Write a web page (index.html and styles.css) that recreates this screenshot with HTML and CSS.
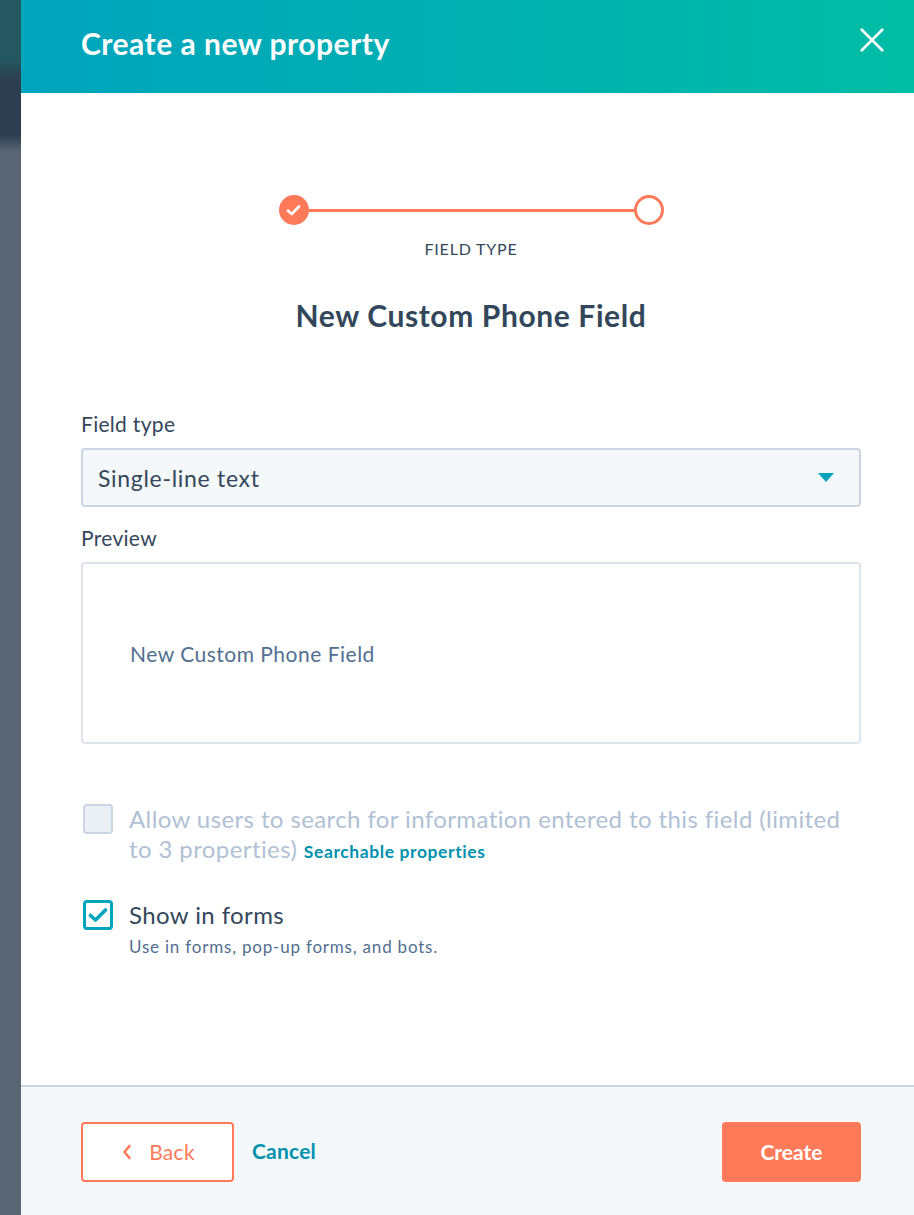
FILE: index.html
```html
<!DOCTYPE html>
<html>
<head>
<meta charset="utf-8">
<link rel="stylesheet" href="styles.css">
</head>
<body>
<div class="page">
  <div class="backdrop"></div>
  <div class="panel">
    <header class="header">
      <h1 class="title">Create a new property</h1>
      <button class="close" aria-label="Close">
        <svg width="24" height="24" viewBox="0 0 24 24"><path d="M1 1 L23 23 M23 1 L1 23" stroke="#fff" stroke-width="2.6" fill="none"/></svg>
      </button>
    </header>
    <main class="body">
      <div class="stepper">
        <div class="step done">
          <svg width="15" height="13" viewBox="0 0 15 13"><path d="M2 6.8 L5.7 10 L13 2.5" stroke="#fff" stroke-width="2.8" fill="none" stroke-linecap="round" stroke-linejoin="round"/></svg>
        </div>
        <div class="step-line"></div>
        <div class="step todo"></div>
      </div>
      <div class="step-label">FIELD TYPE</div>
      <h2 class="field-name">New Custom Phone Field</h2>

      <label class="label first">Field type</label>
      <div class="select">
        <span>Single-line text</span>
        <span class="caret"></span>
      </div>

      <label class="label second">Preview</label>
      <div class="preview">
        <span>New Custom Phone Field</span>
      </div>

      <div class="check-row disabled">
        <span class="box"></span>
        <div class="check-text">Allow users to search for information entered to this field (limited to 3 properties) <a class="link">Searchable properties</a></div>
      </div>

      <div class="check-row checked">
        <span class="box">
          <svg width="20" height="16" viewBox="0 0 20 16"><path d="M2.5 8.5 L7.5 13 L17.5 3" stroke="#00a4bd" stroke-width="3.6" fill="none" stroke-linecap="round" stroke-linejoin="round"/></svg>
        </span>
        <div>
          <div class="check-text dark">Show in forms</div>
          <div class="help">Use in forms, pop-up forms, and bots.</div>
        </div>
      </div>
    </main>
    <footer class="footer">
      <div class="left-actions">
        <button class="btn-back">
          <svg width="10" height="16" viewBox="0 0 10 16"><path d="M7.5 2 L2.5 8 L7.5 14" stroke="#ff7a59" stroke-width="2.6" fill="none" stroke-linecap="round" stroke-linejoin="round"/></svg>
          <span>Back</span>
        </button>
        <a class="cancel">Cancel</a>
      </div>
      <button class="btn-create">Create</button>
    </footer>
  </div>
</div>
</body>
</html>
```

FILE: styles.css
```css
* { box-sizing: border-box; }
html, body { margin: 0; padding: 0; height: 100%; }
body {
  font-family: Lato, "Open Sans", "Liberation Sans", sans-serif;
  color: #33475b;
  background: #fff;
}
.page {
  display: flex;
  height: 1215px;
  width: 914px;
  overflow: hidden;
}
.backdrop {
  width: 21px;
  flex: none;
  background: linear-gradient(to bottom, #24575f 0px, #24575f 60px, #2d3e50 80px, #2d3e50 135px, #5a6673 152px, #5a6673 100%);
}
.panel {
  flex: 1;
  display: flex;
  flex-direction: column;
  background: #fff;
}
.header {
  height: 93px;
  flex: none;
  background: linear-gradient(to right, #00a4bd, #00bda5);
  display: flex;
  align-items: center;
  justify-content: space-between;
  padding: 0 30px 0 60px;
}
.title {
  margin: 0;
  color: #fff;
  font-size: 30px;
  font-weight: 700;
  letter-spacing: 0.5px;
  position: relative;
  top: -4px;
}
.close {
  background: none;
  border: 0;
  padding: 0;
  width: 24px;
  height: 24px;
  position: relative;
  top: -7px;
}
.body {
  flex: 1;
  padding: 102px 53px 0 60px;
  display: flex;
  flex-direction: column;
}
.stepper {
  display: flex;
  align-items: center;
  align-self: center;
  width: 385px;
}
.step {
  width: 30px;
  height: 30px;
  border-radius: 50%;
  flex: none;
  display: flex;
  align-items: center;
  justify-content: center;
}
.step.done { background: #ff7a59; }
.step.todo { border: 3px solid #ff7a59; background: #fff; }
.step-line { flex: 1; height: 3px; background: #ff7a59; }
.step-label {
  margin-top: 14px;
  text-align: center;
  font-size: 16px;
  line-height: 20px;
  font-weight: 400;
  letter-spacing: 0.8px;
  color: #33475b;
}
.field-name {
  margin: 38px 0 0;
  text-align: center;
  font-size: 30px;
  line-height: 36px;
  font-weight: 700;
  letter-spacing: 0.6px;
  color: #33475b;
}
.label {
  display: block;
  font-size: 21px;
  line-height: 24px;
  font-weight: 400;
  letter-spacing: 0.3px;
  color: #33475b;
}
.label.first { margin-top: 79px; }
.label.second { margin-top: 19px; }
.select {
  margin-top: 12px;
  height: 59px;
  background: #f5f8fa;
  border: 2px solid #cbd6e2;
  border-radius: 4px;
  display: flex;
  align-items: center;
  justify-content: space-between;
  padding: 0 25px 0 15px;
  font-size: 23px;
  letter-spacing: 0.7px;
  color: #33475b;
}
.caret {
  width: 0;
  height: 0;
  border-left: 8px solid transparent;
  border-right: 8px solid transparent;
  border-top: 9px solid #00a4bd;
}
.preview {
  margin-top: 12px;
  height: 182px;
  border: 2px solid #dfe3eb;
  border-radius: 4px;
  display: flex;
  align-items: center;
  padding: 0 0 0 47px;
  font-size: 21px;
  letter-spacing: 0.5px;
  color: #516f90;
}
.check-row {
  display: flex;
  align-items: flex-start;
  gap: 16px;
  padding-left: 2px;
}
.check-row.disabled { margin-top: 60px; }
.check-row.checked { margin-top: 36px; }
.box {
  width: 30px;
  height: 30px;
  flex: none;
  border-radius: 4px;
  display: flex;
  align-items: center;
  justify-content: center;
}
.disabled .box { background: #eaf0f6; border: 2px solid #cbd6e2; }
.checked .box { background: #fff; border: 3px solid #00a4bd; }
.check-text {
  font-size: 24px;
  line-height: 30px;
  letter-spacing: 0.4px;
  color: #b0c1d4;
  margin-top: 0;
  padding-right: 10px;
}
.check-text.dark { color: #33475b; }
.link {
  color: #0091ae;
  font-size: 17.5px;
  line-height: 20px;
  font-weight: 700;
  letter-spacing: 0.6px;
}
.help {
  font-size: 17px;
  line-height: 22px;
  letter-spacing: 0.8px;
  color: #516f90;
  margin-top: 6px;
}
.footer {
  height: 130px;
  flex: none;
  background: #f5f8fa;
  border-top: 2px solid #cbd6e2;
  display: flex;
  align-items: flex-start;
  justify-content: space-between;
  padding: 35px 53px 0 60px;
}
.left-actions {
  display: flex;
  align-items: center;
  gap: 18px;
}
.btn-back {
  width: 153px;
  height: 60px;
  border: 2px solid #ff7a59;
  border-radius: 4px;
  background: #fff;
  color: #ff7a59;
  font-family: inherit;
  font-size: 21px;
  font-weight: 400;
  letter-spacing: 0.3px;
  display: flex;
  align-items: center;
  justify-content: center;
  gap: 17px;
  padding: 0 0 0 2px;
}
.btn-back span { position: relative; top: -1px; }
.cancel {
  color: #0091ae;
  font-size: 21px;
  font-weight: 700;
  letter-spacing: 0.2px;
  position: relative;
  top: -2px;
}
.btn-create {
  width: 139px;
  height: 60px;
  border: 0;
  border-radius: 4px;
  background: #ff7a59;
  color: #fff;
  font-family: inherit;
  font-size: 21px;
  font-weight: 700;
  padding-bottom: 2px;
}
```
